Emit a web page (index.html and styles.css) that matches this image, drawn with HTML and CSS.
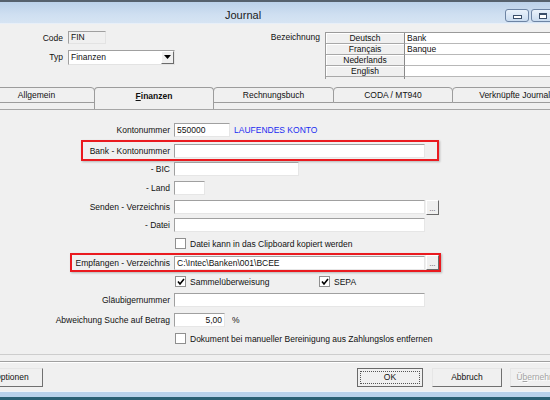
FILE: index.html
```html
<!DOCTYPE html>
<html>
<head>
<meta charset="utf-8">
<link rel="stylesheet" href="styles.css">
</head>
<body>
<div class="window">
  <div class="titlebar">
    <span class="title">Journal</span>
    <div class="winbtns">
      <span class="wb min"><i></i></span>
      <span class="wb max"><i></i></span>
    </div>
  </div>

  <div class="header">
    <div class="hleft">
      <div class="hrow"><span class="hl">Code</span><span class="code">FIN</span></div>
      <div class="hrow typ"><span class="hl">Typ</span>
        <span class="select">Finanzen<span class="dd"><svg width="7" height="4" viewBox="0 0 7 4"><path d="M0 0H7L3.5 4Z" fill="#000"/></svg></span></span>
      </div>
    </div>
    <div class="bez">Bezeichnung</div>
    <div class="grid">
      <div class="grow"><span class="gh">Deutsch</span><span class="gv">Bank</span></div>
      <div class="grow"><span class="gh">Français</span><span class="gv">Banque</span></div>
      <div class="grow"><span class="gh">Nederlands</span><span class="gv"></span></div>
      <div class="grow"><span class="gh">English</span><span class="gv"></span></div>
      <div class="grow rest"><span class="gh"></span><span class="gv"></span></div>
    </div>
  </div>

  <div class="tabs">
    <div class="tab t-allg">Allgemein</div>
    <div class="tab active t-fin"><u>F</u>inanzen</div>
    <div class="tab t-rech">Rechnungsbuch</div>
    <div class="tab t-coda">CODA / MT940</div>
    <div class="tab t-verk">Verknüpfte Journale</div>
  </div>

  <div class="panel">
    <div class="row r-konto">
      <span class="lbl">Kontonummer</span>
      <span class="field w-konto">550000</span>
      <span class="blue">LAUFENDES KONTO</span>
    </div>
    <div class="row hl-box box1">
      <span class="lbl">Bank - Kontonummer</span>
      <span class="field w-long"></span>
    </div>
    <div class="row r-bic">
      <span class="lbl">- BIC</span>
      <span class="field w-bic"></span>
    </div>
    <div class="row r-land">
      <span class="lbl">- Land</span>
      <span class="field w-land"></span>
    </div>
    <div class="row r-senden">
      <span class="lbl">Senden - Verzeichnis</span>
      <span class="field w-long"></span>
      <span class="dots">...</span>
    </div>
    <div class="row r-datei">
      <span class="lbl">- Datei</span>
      <span class="field w-long"></span>
    </div>
    <div class="row chkrow r-clip">
      <span class="lbl"></span>
      <span class="cb"></span><span class="cbtext">Datei kann in das Clipboard kopiert werden</span>
    </div>
    <div class="row hl-box box2">
      <span class="lbl">Empfangen - Verzeichnis</span>
      <span class="field w-long">C:\Intec\Banken\001\BCEE</span>
      <span class="dots">...</span>
    </div>
    <div class="row chkrow r-sammel">
      <span class="lbl"></span>
      <span class="cb checked"><svg width="8" height="8" viewBox="0 0 8 8"><path d="M1 3.5L3 6L7 1" fill="none" stroke="#000" stroke-width="1.6"/></svg></span><span class="cbtext sammel">Sammelüberweisung</span>
      <span class="cb checked"><svg width="8" height="8" viewBox="0 0 8 8"><path d="M1 3.5L3 6L7 1" fill="none" stroke="#000" stroke-width="1.6"/></svg></span><span class="cbtext">SEPA</span>
    </div>
    <div class="row r-glaeub">
      <span class="lbl">Gläubigernummer</span>
      <span class="field w-long"></span>
    </div>
    <div class="row r-abw">
      <span class="lbl">Abweichung Suche auf Betrag</span>
      <span class="field w-abw">5,00</span>
      <span class="pct">%</span>
    </div>
    <div class="row chkrow r-dok">
      <span class="lbl"></span>
      <span class="cb"></span><span class="cbtext">Dokument bei manueller Bereinigung aus Zahlungslos entfernen</span>
    </div>
  </div>

  <div class="sep"></div>

  <div class="footer">
    <span class="btn b-opt">Optionen</span>
    <span class="btn b-ok"><span class="focus">OK</span></span>
    <span class="btn b-abb">Abbruch</span>
    <span class="btn b-ueb">Ü<u>b</u>ernehmen</span>
  </div>

  <div class="strip"></div>
</div>
</body>
</html>
```

FILE: styles.css
```css
html, body {
  margin: 0;
  padding: 0;
}
body {
  background: #f0f0f0;
  font-family: "Liberation Sans", Arial, sans-serif;
  font-size: 8.5px;
  color: #111;
}
.window {
  width: 550px;
  height: 400px;
  overflow: hidden;
  display: flex;
  flex-direction: column;
}

/* title bar */
.titlebar {
  height: 24px;
  flex: none;
  box-sizing: border-box;
  border-top: 2px solid #56616d;
  border-bottom: 1px solid #e8eff8;
  background: linear-gradient(#bcd1e9, #cfdff1 60%, #d6e4f3);
  display: flex;
  align-items: flex-start;
}
.title {
  font-size: 11px;
  margin-left: 225px;
  margin-top: 7px;
  color: #1b1b1b;
}
.winbtns {
  margin-left: auto;
  margin-right: -5px;
  margin-top: 7px;
  display: flex;
  gap: 2px;
}
.wb {
  width: 24px;
  height: 13px;
  box-sizing: border-box;
  border: 1px solid #6d84a4;
  border-radius: 3px;
  background: linear-gradient(#eaf2fb, #c9dbef);
  display: flex;
  align-items: center;
  justify-content: center;
}
.wb i {
  display: block;
  box-sizing: border-box;
  background: #fff;
  border: 1px solid #3a4e69;
}
.wb.min i { width: 9px; height: 4px; margin-top: 3px; }
.wb.max i { width: 8px; height: 6px; border-top-width: 2px; }

/* header */
.header {
  height: 62px;
  flex: none;
  display: flex;
  align-items: flex-start;
}
.hleft {
  width: 270px;
  flex: none;
  padding-top: 7px;
}
.hrow {
  display: flex;
  align-items: center;
  height: 13px;
}
.hrow.typ {
  margin-top: 6px;
  height: 14px;
}
.hl {
  width: 63px;
  text-align: right;
  margin-right: 5px;
}
.code {
  width: 38px;
  height: 13px;
  box-sizing: border-box;
  border: 1px solid;
  border-color: #a0a0a0 #e3e3e3 #e3e3e3 #a0a0a0;
  background: #f0f0f0;
  padding-left: 2px;
  line-height: 11px;
}
.select {
  width: 107px;
  height: 15px;
  box-sizing: border-box;
  border: 1px solid;
  border-color: #a0a0a0 #e3e3e3 #e3e3e3 #a0a0a0;
  background: #fff;
  padding-left: 2px;
  line-height: 13px;
  display: flex;
  justify-content: space-between;
}
.dd {
  width: 13px;
  height: 13px;
  box-sizing: border-box;
  border: 1px solid;
  border-color: #fff #6b6b6b #6b6b6b #fff;
  background: #f0f0f0;
  display: flex;
  align-items: center;
  justify-content: center;
}
.bez {
  width: 55px;
  flex: none;
  box-sizing: border-box;
  padding-right: 5px;
  text-align: right;
  margin-top: 8px;
  line-height: 10px;
}
.grid {
  margin-top: 8px;
  width: 230px;
  flex: none;
  border-top: 1px solid #9a9a9a;
  border-left: 1px solid #9a9a9a;
}
.grow {
  display: flex;
  height: 11px;
}
.grow.rest { height: 2px; }
.gh {
  width: 79px;
  flex: none;
  box-sizing: border-box;
  background: #f0f0f0;
  border-right: 1px solid #8a8a8a;
  border-bottom: 1px solid #a8a8a8;
  box-shadow: inset 1px 1px #fff;
  text-align: center;
  line-height: 10px;
}
.gv {
  flex: 1;
  box-sizing: border-box;
  background: #fff;
  border-bottom: 1px solid #b8b8b8;
  padding-left: 2px;
  line-height: 10px;
}
.rest .gh, .rest .gv { border-bottom: none; box-shadow: none; }
.rest .gv { background: #f0f0f0; }

/* tabs */
.tabs {
  height: 24px;
  flex: none;
  box-sizing: border-box;
  border-bottom: 1px solid #a6a6a6;
  display: flex;
  align-items: flex-start;
}
.tab {
  flex: none;
  height: 16px;
  margin-top: 1px;
  margin-right: -1px;
  box-sizing: border-box;
  border: 1px solid #9c9c9c;
  border-radius: 4px 4px 0 0;
  text-align: center;
  line-height: 14px;
  background: #f0f0f0;
  white-space: nowrap;
}
.tab.active {
  height: 22px;
  border-bottom: none;
  font-weight: bold;
  line-height: 16px;
  position: relative;
  z-index: 1;
}
.t-allg { margin-left: -22px; width: 117px; }
.t-fin { width: 120px; }
.t-rech { width: 121px; }
.t-coda { width: 120px; }
.t-verk { width: 130px; }

/* panel */
.panel {
  height: 245px;
  flex: none;
  box-sizing: border-box;
  padding-top: 13px;
  border-bottom: 1px solid #cdcdcd;
  display: flex;
  flex-direction: column;
}
.row {
  display: flex;
  align-items: center;
  height: 14px;
  flex: none;
  white-space: nowrap;
}
.lbl {
  width: 170px;
  flex: none;
  text-align: right;
}
.field {
  margin-left: 4px;
  height: 14px;
  flex: none;
  box-sizing: border-box;
  background: #fff;
  border: 1px solid;
  border-color: #a0a0a0 #e6e6e6 #e6e6e6 #a0a0a0;
  padding-left: 2px;
  line-height: 12px;
  overflow: hidden;
}
.w-konto { width: 56px; }
.w-long { width: 251px; }
.w-bic { width: 125px; }
.w-land { width: 31px; }
.w-abw { width: 51px; text-align: right; padding-right: 2px; }
.blue {
  color: #1b2cf0;
  margin-left: 4px;
}
.pct { margin-left: 7px; }
.dots {
  width: 13px;
  height: 15px;
  margin-left: 1px;
  flex: none;
  box-sizing: border-box;
  border: 1px solid;
  border-color: #fff #6b6b6b #6b6b6b #fff;
  background: #f0f0f0;
  text-align: center;
  line-height: 16px;
  font-size: 7px;
  color: #333;
}
.hl-box {
  box-sizing: border-box;
  border: 2px solid #ea1a1f;
  box-shadow: 1px 1px 2px rgba(0, 0, 0, 0.25);
}
.box1 {
  margin-top: 3px;
  height: 21px;
  margin-left: 81px;
  width: 358px;
}
.box1 .lbl { width: 87px; }
.box2 {
  margin-top: 4px;
  height: 19px;
  margin-left: 70px;
  width: 371px;
}
.box2 .lbl { width: 98px; }
.r-bic { margin-top: 1px; }
.r-land { margin-top: 5px; }
.r-senden { margin-top: 5px; }
.r-datei { margin-top: 4px; }
.chkrow { height: 11px; }
.r-clip { margin-top: 6px; }
.r-sammel { margin-top: 4px; }
.r-glaeub { margin-top: 6px; }
.r-abw { margin-top: 6px; }
.r-dok { margin-top: 6px; }
.cb {
  width: 11px;
  height: 11px;
  margin-left: 5px;
  flex: none;
  box-sizing: border-box;
  border: 1px solid #8f8f8f;
  background: #fff;
  display: flex;
  align-items: center;
  justify-content: center;
}
.cbtext { margin-left: 4px; }
.cbtext.sammel { width: 124px; }

/* footer */
.sep {
  flex: none;
  margin-top: 6px;
  border-top: 1px solid #a0a0a0;
  border-bottom: 1px solid #fff;
}
.footer {
  flex: none;
  display: flex;
  margin-top: 5px;
  height: 19px;
}
.btn {
  flex: none;
  height: 19px;
  box-sizing: border-box;
  border: 1px solid;
  border-color: #e6e6e6 #707070 #707070 #e6e6e6;
  background: #f0f0f0;
  text-align: center;
  line-height: 17px;
  white-space: nowrap;
}
.b-opt { margin-left: -20px; width: 63px; }
.b-ok {
  margin-left: 314px;
  width: 66px;
  border: 1px solid #6a6a6a;
  padding: 2px;
  line-height: 13px;
}
.b-ok .focus {
  display: block;
  height: 13px;
  border: 1px dotted #555;
  box-sizing: border-box;
  line-height: 11px;
}
.b-abb { margin-left: 9px; width: 70px; }
.b-ueb {
  margin-left: 8px;
  width: 62px;
  color: #a3a3a3;
  text-shadow: 1px 1px #fff;
}

.strip {
  flex: none;
  margin-top: 4px;
  height: 9px;
  background: linear-gradient(#eef4fa 0 1px, #b8d2ec 1px 6px, #2a6176 6px);
}
```
